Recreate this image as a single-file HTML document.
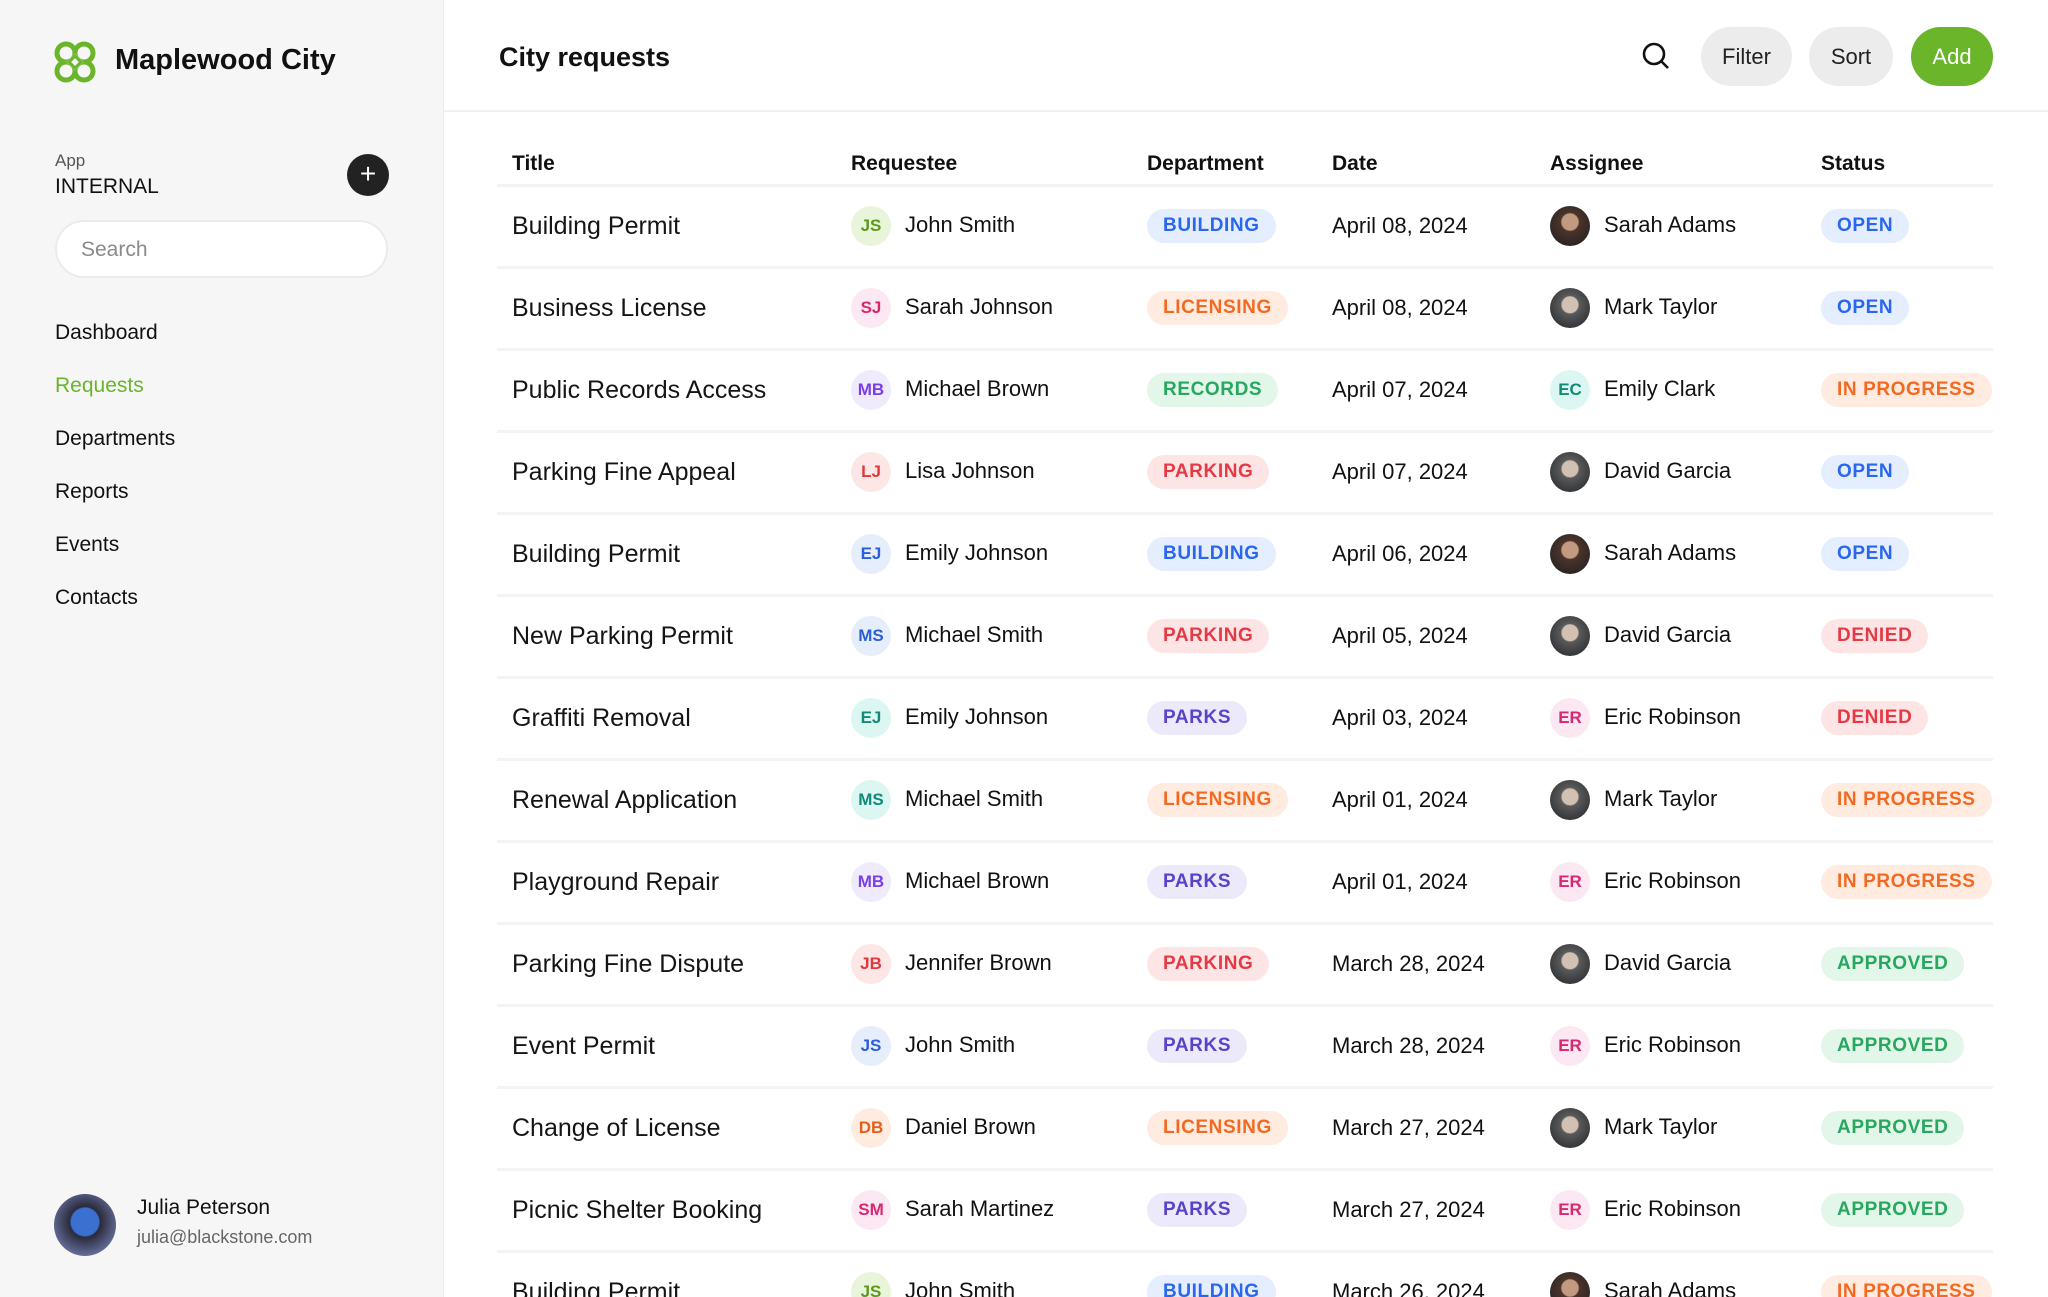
<!DOCTYPE html>
<html><head><meta charset="utf-8"><style>
*{margin:0;padding:0;box-sizing:border-box}
html{width:2048px;height:1297px;overflow:hidden}
body{width:2048px;height:1297px;overflow:hidden;font-family:"Liberation Sans",sans-serif;color:#111;background:#fff;position:relative}
.side{position:absolute;left:0;top:0;width:444px;height:1297px;background:#f6f6f6;border-right:1px solid #ececec}
.abs{position:absolute}
.nav{position:absolute;left:55px;font-size:21px;color:#111}
.hdr{position:absolute;right:0;top:0;height:112px;border-bottom:2px solid #f1f1f1}
.btn{position:absolute;top:27px;height:59px;border-radius:30px;background:#ececec;font-size:22px;display:flex;align-items:center;justify-content:center;color:#222}
.wrap{position:absolute;left:497px;top:140px;width:1500px;height:1157px;overflow:hidden}
table{width:1496px;border-collapse:collapse;table-layout:fixed}
th{font-size:21px;font-weight:bold;text-align:left;height:45px;border-bottom:3px solid #f2f2f2;vertical-align:middle;padding-top:4px}
td{height:82px;border-bottom:3px solid #f3f3f3;font-size:22px;vertical-align:middle;white-space:nowrap;overflow:visible}
td.t{font-size:25px;padding-left:15px;color:#151515}
th.t{padding-left:15px}
.av{display:inline-block;width:40px;height:40px;border-radius:50%;font-size:17px;font-weight:bold;text-align:center;line-height:40px;vertical-align:middle;margin-right:14px}
.ph{display:inline-block;width:40px;height:40px;border-radius:50%;vertical-align:middle;margin-right:14px;background:radial-gradient(circle at 50% 40%,#c29a80 0 26%,#4a342a 30%,#1d1d22 100%)}
.ph.m{background:radial-gradient(circle at 50% 42%,#d2c0b2 0 26%,#5a5a5a 30%,#202228 100%)}
.b{display:inline-block;height:34px;line-height:34px;padding:0 16px;border-radius:17px;font-size:19px;letter-spacing:0.6px;font-weight:bold}
.bu{background:#e4eeff;color:#2a66ee}.li{background:#ffebdf;color:#f26a22}.re{background:#e2f6ea;color:#27a85e}.pa{background:#fde5e6;color:#e53a45}.pk{background:#ece9fb;color:#5a43c8}
.ap{background:#e2f6ea;color:#27a85e}
.g{background:#e8f5da;color:#5c9a1c}.p{background:#fce8f2;color:#d8266f}.v{background:#efebfd;color:#7b3fe6}.r{background:#fde6e6;color:#e0383e}.bl{background:#e6eefc;color:#2b5fd9}.tl{background:#dcf7f2;color:#128a78}.o{background:#ffebe0;color:#e25f1c}
</style></head><body>
<div class="side">
 <svg class="abs" style="left:53px;top:40px" width="44" height="44" viewBox="0 0 44 44" fill="none" stroke="#6ab52a" stroke-width="5"><circle cx="13" cy="13" r="9"/><circle cx="31" cy="13" r="9"/><circle cx="13" cy="31" r="9"/><circle cx="31" cy="31" r="9"/><path d="M22 15L29 22L22 29L15 22Z" fill="#f6f6f6" stroke="#f6f6f6" stroke-width="2"/><path d="M22 16L28 22L22 28L16 22Z" fill="none" stroke="#6ab52a" stroke-width="3"/></svg>
 <div class="abs" style="left:115px;top:44px;font-size:29px;font-weight:bold;color:#111">Maplewood City</div>
 <div class="abs" style="left:55px;top:151px;font-size:17px;color:#555">App</div>
 <div class="abs" style="left:55px;top:175px;font-size:21px">INTERNAL</div>
 <div class="abs" style="left:347px;top:154px;width:42px;height:42px;border-radius:50%;background:#222;color:#fff;font-size:28px;text-align:center;line-height:40px">+</div>
 <div class="abs" style="left:55px;top:220px;width:333px;height:58px;border-radius:29px;background:#fff;border:2px solid #ebebeb;font-size:21px;color:#8a8a8a;padding:16px 0 0 24px">Search</div>
 <div class="nav" style="top:321px">Dashboard</div>
 <div class="nav" style="top:374px;color:#6ab52a">Requests</div>
 <div class="nav" style="top:427px">Departments</div>
 <div class="nav" style="top:480px">Reports</div>
 <div class="nav" style="top:533px">Events</div>
 <div class="nav" style="top:586px">Contacts</div>
 <div class="abs" style="left:54px;top:1194px;width:62px;height:62px;border-radius:50%;background:radial-gradient(circle at 50% 45%,#3b6fd0 0 30%,#2a2a3a 33%,#8a9ad8 100%)"></div>
 <div class="abs" style="left:137px;top:1196px;font-size:21px">Julia Peterson</div>
 <div class="abs" style="left:137px;top:1227px;font-size:18px;color:#666">julia@blackstone.com</div>
</div>
<div class="hdr" style="left:444px">
 <div class="abs" style="left:55px;top:42px;font-size:27px;font-weight:bold">City requests</div>
 <svg class="abs" style="left:1197px;top:41px" width="30" height="30" viewBox="0 0 30 30" fill="none" stroke="#111" stroke-width="2.6"><circle cx="13" cy="13" r="10"/><path d="M20.5 20.5L27 27"/></svg>
 <div class="btn" style="left:1257px;width:91px">Filter</div>
 <div class="btn" style="left:1365px;width:84px">Sort</div>
 <div class="btn" style="left:1467px;width:82px;background:#6ab52a;color:#fff">Add</div>
</div>
<div class="wrap">
<table>
<colgroup><col style="width:354px"><col style="width:296px"><col style="width:185px"><col style="width:218px"><col style="width:271px"><col></colgroup>
<tr><th class="t">Title</th><th>Requestee</th><th>Department</th><th>Date</th><th>Assignee</th><th>Status</th></tr>
<tr><td class="t">Building Permit</td><td><span class="av g">JS</span>John Smith</td><td><span class="b bu">BUILDING</span></td><td>April 08, 2024</td><td><span class="ph"></span>Sarah Adams</td><td><span class="b bu">OPEN</span></td></tr>
<tr><td class="t">Business License</td><td><span class="av p">SJ</span>Sarah Johnson</td><td><span class="b li">LICENSING</span></td><td>April 08, 2024</td><td><span class="ph m"></span>Mark Taylor</td><td><span class="b bu">OPEN</span></td></tr>
<tr><td class="t">Public Records Access</td><td><span class="av v">MB</span>Michael Brown</td><td><span class="b re">RECORDS</span></td><td>April 07, 2024</td><td><span class="av tl">EC</span>Emily Clark</td><td><span class="b li">IN PROGRESS</span></td></tr>
<tr><td class="t">Parking Fine Appeal</td><td><span class="av r">LJ</span>Lisa Johnson</td><td><span class="b pa">PARKING</span></td><td>April 07, 2024</td><td><span class="ph m"></span>David Garcia</td><td><span class="b bu">OPEN</span></td></tr>
<tr><td class="t">Building Permit</td><td><span class="av bl">EJ</span>Emily Johnson</td><td><span class="b bu">BUILDING</span></td><td>April 06, 2024</td><td><span class="ph"></span>Sarah Adams</td><td><span class="b bu">OPEN</span></td></tr>
<tr><td class="t">New Parking Permit</td><td><span class="av bl">MS</span>Michael Smith</td><td><span class="b pa">PARKING</span></td><td>April 05, 2024</td><td><span class="ph m"></span>David Garcia</td><td><span class="b pa">DENIED</span></td></tr>
<tr><td class="t">Graffiti Removal</td><td><span class="av tl">EJ</span>Emily Johnson</td><td><span class="b pk">PARKS</span></td><td>April 03, 2024</td><td><span class="av p">ER</span>Eric Robinson</td><td><span class="b pa">DENIED</span></td></tr>
<tr><td class="t">Renewal Application</td><td><span class="av tl">MS</span>Michael Smith</td><td><span class="b li">LICENSING</span></td><td>April 01, 2024</td><td><span class="ph m"></span>Mark Taylor</td><td><span class="b li">IN PROGRESS</span></td></tr>
<tr><td class="t">Playground Repair</td><td><span class="av v">MB</span>Michael Brown</td><td><span class="b pk">PARKS</span></td><td>April 01, 2024</td><td><span class="av p">ER</span>Eric Robinson</td><td><span class="b li">IN PROGRESS</span></td></tr>
<tr><td class="t">Parking Fine Dispute</td><td><span class="av r">JB</span>Jennifer Brown</td><td><span class="b pa">PARKING</span></td><td>March 28, 2024</td><td><span class="ph m"></span>David Garcia</td><td><span class="b ap">APPROVED</span></td></tr>
<tr><td class="t">Event Permit</td><td><span class="av bl">JS</span>John Smith</td><td><span class="b pk">PARKS</span></td><td>March 28, 2024</td><td><span class="av p">ER</span>Eric Robinson</td><td><span class="b ap">APPROVED</span></td></tr>
<tr><td class="t">Change of License</td><td><span class="av o">DB</span>Daniel Brown</td><td><span class="b li">LICENSING</span></td><td>March 27, 2024</td><td><span class="ph m"></span>Mark Taylor</td><td><span class="b ap">APPROVED</span></td></tr>
<tr><td class="t">Picnic Shelter Booking</td><td><span class="av p">SM</span>Sarah Martinez</td><td><span class="b pk">PARKS</span></td><td>March 27, 2024</td><td><span class="av p">ER</span>Eric Robinson</td><td><span class="b ap">APPROVED</span></td></tr>
<tr><td class="t">Building Permit</td><td><span class="av g">JS</span>John Smith</td><td><span class="b bu">BUILDING</span></td><td>March 26, 2024</td><td><span class="ph"></span>Sarah Adams</td><td><span class="b li">IN PROGRESS</span></td></tr>
</table>
</div>
</body></html>
